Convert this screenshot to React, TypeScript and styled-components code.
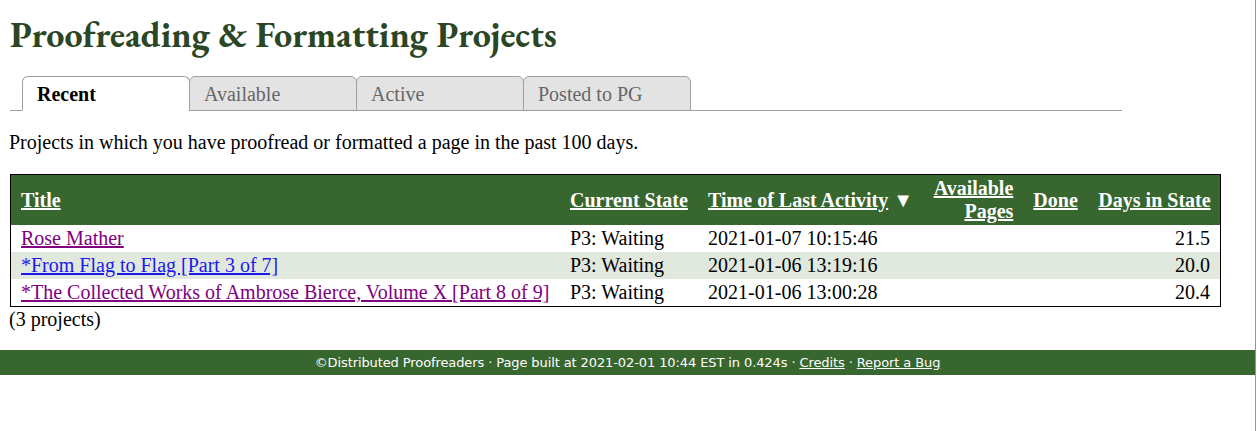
import React from 'react';
import styled, { createGlobalStyle } from 'styled-components';

const GlobalStyle = createGlobalStyle`
  html, body {
    margin: 0;
    padding: 0;
    background: #fff;
  }
  body {
    font-family: "Liberation Serif", "Times New Roman", serif;
    font-size: 20px;
    color: #000;
  }
`;

const Frame = styled.div`
  width: 1256px;
  min-height: 100vh;
  border-right: 1px solid #8b97a3;
  box-sizing: border-box;
  display: flex;
  flex-direction: column;
`;

const Main = styled.main`
  padding: 0 10px;
`;

const Heading = styled.h1`
  margin: 12px 0 18px;
  font-family: "EB Garamond", "Liberation Serif", serif;
  font-size: 36px;
  line-height: 46px;
  font-weight: bold;
  color: #2b4624;
`;

const TabBar = styled.ul`
  display: flex;
  list-style: none;
  margin: 0;
  padding: 0 0 0 12px;
  width: 1100px;
  border-bottom: 1px solid #a0a0a0;
`;

const Tab = styled.li<{ $active?: boolean }>`
  width: 168px;
  height: 35px;
  box-sizing: border-box;
  margin-bottom: -1px;
  padding: 6px 0 0 14px;
  border: 1px solid #a0a0a0;
  border-bottom-color: ${(p) => (p.$active ? '#fff' : '#a0a0a0')};
  border-radius: 6px 6px 0 0;
  background: ${(p) => (p.$active ? '#fff' : '#e3e3e3')};
  color: ${(p) => (p.$active ? '#000' : '#666')};
  font-weight: ${(p) => (p.$active ? 'bold' : 'normal')};
  & + & {
    margin-left: -1px;
  }
`;

const Intro = styled.p`
  margin: 20px 0 20px -1px;
`;

const Table = styled.table`
  width: 1211px;
  border-collapse: collapse;
  table-layout: fixed;
  border: 1px solid #000;
`;

const HeadCell = styled.th<{ $w: number; $right?: boolean }>`
  width: ${(p) => p.$w}px;
  box-sizing: border-box;
  background: #38662f;
  color: #fff;
  padding: 2px 10px;
  text-align: ${(p) => (p.$right ? 'right' : 'left')};
  vertical-align: middle;
  font-weight: bold;
  line-height: 23px;
  white-space: nowrap;
`;

const HeadLink = styled.a`
  color: #fff;
  text-decoration: underline;
`;

const Row = styled.tr<{ $shade?: boolean }>`
  background: ${(p) => (p.$shade ? '#e1e8de' : '#fff')};
`;

const Cell = styled.td<{ $right?: boolean }>`
  padding: 2px 10px;
  line-height: 23px;
  white-space: nowrap;
  text-align: ${(p) => (p.$right ? 'right' : 'left')};
`;

const TitleLink = styled.a<{ $visited?: boolean }>`
  color: ${(p) => (p.$visited ? '#800080' : '#1a1aee')};
  text-decoration: underline;
`;

const Count = styled.div`
  margin: 1px 0 0 -1px;
`;

const Footer = styled.footer`
  margin-top: 19px;
  height: 25px;
  background: #38662f;
  color: #fff;
  font-family: "DejaVu Sans", Tahoma, sans-serif;
  font-size: 13px;
  letter-spacing: -0.1px;
  display: flex;
  align-items: center;
  justify-content: center;
`;

const FooterLink = styled.a`
  color: #fff;
  text-decoration: underline;
`;

const projects = [
  { title: 'Rose Mather', visited: true, state: 'P3: Waiting', time: '2021-01-07 10:15:46', days: '21.5' },
  { title: '*From Flag to Flag [Part 3 of 7]', visited: false, state: 'P3: Waiting', time: '2021-01-06 13:19:16', days: '20.0' },
  {
    title: '*The Collected Works of Ambrose Bierce, Volume X [Part 8 of 9]',
    visited: true,
    state: 'P3: Waiting',
    time: '2021-01-06 13:00:28',
    days: '20.4',
  },
];

export default function App() {
  return (
    <Frame>
      <GlobalStyle />
      <Main>
        <Heading>Proofreading &amp; Formatting Projects</Heading>
        <TabBar>
          <Tab $active>Recent</Tab>
          <Tab>Available</Tab>
          <Tab>Active</Tab>
          <Tab>Posted to PG</Tab>
        </TabBar>
        <Intro>Projects in which you have proofread or formatted a page in the past 100 days.</Intro>
        <Table>
          <thead>
            <tr>
              <HeadCell $w={549}><HeadLink href="#">Title</HeadLink></HeadCell>
              <HeadCell $w={138}><HeadLink href="#">Current State</HeadLink></HeadCell>
              <HeadCell $w={224}><HeadLink href="#">Time of Last Activity</HeadLink> ▼</HeadCell>
              <HeadCell $w={101} $right><HeadLink href="#">Available<br />Pages</HeadLink></HeadCell>
              <HeadCell $w={65}><HeadLink href="#">Done</HeadLink></HeadCell>
              <HeadCell $w={132}><HeadLink href="#">Days in State</HeadLink></HeadCell>
            </tr>
          </thead>
          <tbody>
            {projects.map((p, i) => (
              <Row key={p.title} $shade={i % 2 === 1}>
                <Cell><TitleLink href="#" $visited={p.visited}>{p.title}</TitleLink></Cell>
                <Cell>{p.state}</Cell>
                <Cell>{p.time}</Cell>
                <Cell $right></Cell>
                <Cell $right></Cell>
                <Cell $right>{p.days}</Cell>
              </Row>
            ))}
          </tbody>
        </Table>
        <Count>(3 projects)</Count>
      </Main>
      <Footer>
        ©Distributed Proofreaders · Page built at 2021-02-01 10:44 EST in 0.424s ·&nbsp;
        <FooterLink href="#">Credits</FooterLink>&nbsp;·&nbsp;<FooterLink href="#">Report a Bug</FooterLink>
      </Footer>
    </Frame>
  );
}
